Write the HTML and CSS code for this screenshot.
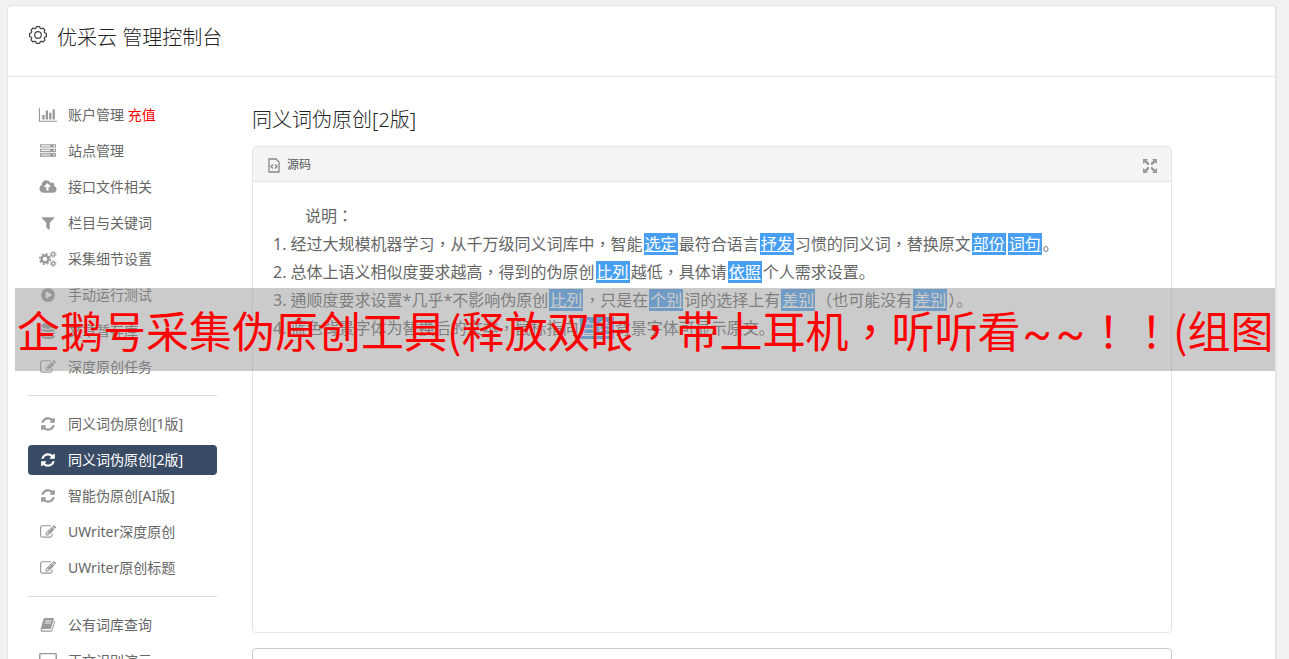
FILE: index.html
```html
<!DOCTYPE html>
<html lang="zh-CN">

<head>
    <meta charset="UTF-8">
    <meta name="viewport" content="width=device-width, initial-scale=1.0">
    <title>优采云 管理控制台</title>
    <link rel="stylesheet" href="styles.css">
</head>

<body>
    <svg class="sprite" aria-hidden="true">
        <symbol id="refresh" viewBox="0 0 1792 1792"><path d="M1639 1056q0 5-1 7-64 268-268 434.5t-478 166.5q-146 0-282.5-55t-243.5-157l-129 129q-19 19-45 19t-45-19-19-45v-448q0-26 19-45t45-19h448q26 0 45 19t19 45-19 45l-137 137q71 66 161 102t187 36q134 0 250-65t186-179q11-17 53-117 8-23 30-23h192q13 0 22.5 9.5t9.5 22.5zm25-800v448q0 26-19 45t-45 19h-448q-26 0-45-19t-19-45 19-45l138-138q-148-137-349-137-134 0-250 65t-186 179q-11 17-53 117-8 23-30 23h-199q-13 0-22.5-9.5t-9.5-22.5v-7q65-268 270-434.5t480-166.5q146 0 284 55.5t245 156.5l130-129q19-19 45-19t45 19 19 45z"/></symbol>
        <symbol id="edit" viewBox="0 0 1792 1792"><path d="M888 1184l116-116-152-152-116 116v56h96v96h56zm440-720q-16-16-33 1l-350 350q-17 17-1 33t33-1l350-350q17-17 1-33zm80 594v190q0 119-84.5 203.5t-203.5 84.5h-832q-119 0-203.5-84.5t-84.5-203.5v-832q0-119 84.5-203.5t203.5-84.5h832q63 0 117 25 15 7 18 23 3 17-9 29l-49 49q-14 14-32 8-23-6-45-6h-832q-66 0-113 47t-47 113v832q0 66 47 113t113 47h832q66 0 113-47t47-113v-126q0-13 9-22l64-64q15-15 35-7t20 29zm-96-738l288 288-672 672h-288v-288zm444 132l-92 92-288-288 92-92q28-28 68-28t68 28l152 152q28 28 28 68t-28 68z"/></symbol>
    </svg>

    <div class="container">
        <header class="header">
            <svg class="gear" viewBox="0 0 20 20" aria-hidden="true">
                <path d="M8.4 1.6h3.2l.6 1.7 1.2.5 1.6-.8 2 2-.8 1.6.5 1.2 1.7.6v3.2l-1.7.6-.5 1.2.8 1.6-2 2-1.6-.8-1.2.5-.6 1.7H8.4l-.6-1.7-1.2-.5-1.6.8-2-2 .8-1.6-.5-1.2-1.7-.6V8.4l1.7-.6.5-1.2L3 5l2-2 1.600.8 1.200-.5z"/>
                <circle cx="10" cy="10" r="3.3"/>
            </svg>
            <h1>优采云 管理控制台</h1>
        </header>

        <div class="main">
            <nav class="sidebar">
                <a href="#"><svg viewBox="0 0 2048 1792"><path d="M640 896v512h-256v-512h256zm384-512v1024h-256v-1024h256zm1024 1152v128h-2048v-1536h128v1408h1920zm-640-896v768h-256v-768h256zm384-384v1152h-256v-1152h256z"/></svg><span>账户管理 <b>充值</b></span></a>
                <a href="#"><svg viewBox="0 0 1792 1792"><path d="M128 1408h1024v-128h-1024v128zm0-512h1024v-128h-1024v128zm1568 448q0-40-28-68t-68-28-68 28-28 68 28 68 68 28 68-28 28-68zm-1568-960h1024v-128h-1024v128zm1568 448q0-40-28-68t-68-28-68 28-28 68 28 68 68 28 68-28 28-68zm0-512q0-40-28-68t-68-28-68 28-28 68 28 68 68 28 68-28 28-68zm96 832v384h-1792v-384h1792zm0-512v384h-1792v-384h1792zm0-512v384h-1792v-384h1792z"/></svg><span>站点管理</span></a>
                <a href="#"><svg viewBox="0 0 1920 1792"><path d="M1280 864q0-14-9-23l-352-352q-9-9-23-9t-23 9l-351 351q-10 12-10 24 0 14 9 23t23 9h224v352q0 13 9.500 22.500t22.500 9.500h192q13 0 22.500-9.500t9.500-22.500v-352h224q13 0 22.500-9.500t9.500-22.500zm640 288q0 159-112.500 271.500t-271.500 112.500h-1088q-185 0-316.500-131.500t-131.500-316.500q0-130 70-240t188-165q-2-30-2-43 0-212 150-362t362-150q156 0 285.500 87t188.500 231q71-62 166-62 106 0 181 75t75 181q0 76-41 138 130 31 213.500 135.500t83.500 238.500z"/></svg><span>接口文件相关</span></a>
                <a href="#"><svg viewBox="0 0 1792 1792"><path d="M1595 295q17 41-14 70l-493 493v742q0 42-39 59-13 5-25 5-27 0-45-19l-256-256q-19-19-19-45v-486l-493-493q-31-29-14-70 17-39 59-39h1280q42 0 59 39z"/></svg><span>栏目与关键词</span></a>
                <a href="#"><svg class="cogs" viewBox="0 0 18 16">
                    <circle cx="6" cy="8" r="3.4" stroke-width="2.4"/><circle cx="6" cy="8" r="5.2" stroke-width="1.6" stroke-dasharray="2.04 2.04"/>
                    <circle cx="14.2" cy="3.4" r="1.8" stroke-width="1.3"/><circle cx="14.2" cy="3.4" r="2.8" stroke-width="1" stroke-dasharray="1.1 1.1"/>
                    <circle cx="14.2" cy="12.6" r="1.8" stroke-width="1.3"/><circle cx="14.2" cy="12.6" r="2.8" stroke-width="1" stroke-dasharray="1.1 1.1"/>
                </svg><span>采集细节设置</span></a>
                <a href="#"><svg viewBox="0 0 1792 1792"><path d="M896 128q209 0 385.500 103t279.500 279.500 103 385.500-103 385.500-279.500 279.500-385.500 103-385.500-103-279.500-279.500-103-385.500 103-385.500 279.500-279.500 385.500-103zm384 823q32-18 32-55t-32-55l-544-320q-31-19-64-1-32 19-32 56v640q0 37 32 56 16 8 32 8 17 0 32-9z"/></svg><span>手动运行测试</span></a>
                <a href="#"><svg viewBox="0 0 1792 1792"><path d="M896 768q237 0 443-43t325-127v170q0 69-103 128t-280 93.500-385 34.500-385-34.500-280-93.500-103-128v-170q119 84 325 127t443 43zm0 768q237 0 443-43t325-127v170q0 69-103 128t-280 93.500-385 34.500-385-34.500-280-93.500-103-128v-170q119 84 325 127t443 43zm0-384q237 0 443-43t325-127v170q0 69-103 128t-280 93.500-385 34.500-385-34.500-280-93.500-103-128v-170q119 84 325 127t443 43zm0-1152q208 0 385 34.500t280 93.500 103 128v128q0 69-103 128t-280 93.500-385 34.500-385-34.500-280-93.500-103-128v-128q0-69 103-128t280-93.500 385-34.500z"/></svg><span>文章暂存库</span></a>
                <a href="#"><svg><use href="#edit"/></svg><span>深度原创任务</span></a>
                <hr>
                <a href="#"><svg><use href="#refresh"/></svg><span>同义词伪原创[1版]</span></a>
                <a href="#" class="active"><svg><use href="#refresh"/></svg><span>同义词伪原创[2版]</span></a>
                <a href="#"><svg><use href="#refresh"/></svg><span>智能伪原创[AI版]</span></a>
                <a href="#"><svg><use href="#edit"/></svg><span>UWriter深度原创</span></a>
                <a href="#"><svg><use href="#edit"/></svg><span>UWriter原创标题</span></a>
                <hr>
                <a href="#"><svg viewBox="0 0 16 16"><path fill-rule="evenodd" d="M5 1h8.200q1 0 .7 1l-2.700 9q-.3 1-1.300 1H2.500q-.8 0-.8.700 0 .8 1 .8h8q.8 0 1.100-.9L14.500 3.500q.9.500.6 1.400l-2.700 8.600q-.4 1.300-1.800 1.300H2.500Q1 14.800.7 13.300q-.2-.8.2-2L3.300 2.500Q3.700 1 5 1zm.6 2.500-.3.900h6l.3-.9zm-.7 2.200-.3.900h6l.3-.9z"/></svg><span>公有词库查询</span></a>
                <a href="#"><svg viewBox="0 0 18 16"><path fill-rule="evenodd" d="M1.500 0h15Q18 0 18 1.500v10q0 1.500-1.500 1.500H11l1 3H6l1-3H1.500Q0 13 0 11.500v-10Q0 0 1.500 0zm0 1.300v8.700h15V1.300z"/></svg><span>正文识别演示</span></a>
            </nav>

            <main class="content">
                <h2>同义词伪原创[2版]</h2>
                <section class="editor">
                    <div class="toolbar">
                        <button class="source">
                            <svg viewBox="0 0 12 15" aria-hidden="true"><path d="M1 1h7l3 3v10H1z"/><path d="M5 6.500 3 8.500l2 2M7 6.500l2 2-2 2"/></svg>源码
                        </button>
                        <button class="full" aria-label="全屏">
                            <svg viewBox="0 0 14 14" aria-hidden="true"><path d="M0 0h5L3.600 1.400 6 3.800v2.200H4.600L1.800 3.200 0 5zM14 0v5l-1.800-1.800L9.400 6H8V3.800l2.400-2.400L9 0zM0 14V9l1.800 1.800L4.600 8H6v2.200l-2.400 2.400L5 14zM14 14H9l1.400-1.400L8 10.200V8h1.400l2.800 2.800L14 9z"/></svg>
                        </button>
                    </div>
                    <div class="text" lang="zh-TW">
                        <p class="indent">说明：</p>
                        <p>1. 经过大规模机器学习，从千万级同义词库中，智能<u>选定</u>最符合语言<u>抒发</u>习惯的同义词，替换原文<u>部份</u><u>词句</u><span lang="zh-CN">。</span></p>
                        <p>2. 总体上语义相似度要求越高，得到的伪原创<u>比列</u>越低，具体请<u>依照</u>个人需求设置<span lang="zh-CN">。</span></p>
                        <p>3. 通顺度要求设置*几乎*不影响伪原创<u>比列</u>，只是在<u>个别</u>词的选择上有<u>差别</u>（也可能没有<u>差别</u>）<span lang="zh-CN">。</span></p>
                        <p>4. 蓝色背景字体为替换后的文本，鼠标指向<u>白色</u>背景字体可显示原文<span lang="zh-CN">。</span></p>
                    </div>
                </section>
                <section class="output"></section>
            </main>
        </div>
    </div>

    <div class="banner" lang="zh-TW">企鹅号采集伪原创工具(释放双眼，带上耳机，听听看<span class="wave">~</span><span class="wave">~</span>！！(组图</div>
</body>

</html>
```
FILE: styles.css
```css
* { box-sizing: border-box; }
body {
    margin: 0;
    height: 100vh;
    overflow: hidden;
    padding: 5px 12px 0 7px;
    background: #f1f1f1;
    color: #666;
    font-family: "Noto Sans", "Noto Sans CJK SC", sans-serif;
    font-size: 14px;
}
.sprite { display: none; }
h1, h2 {
    margin: 0;
    font-size: 20px;
    line-height: 28px;
    font-weight: 300;
    color: #222;
}
.container {
    background: white;
    border: 1px solid #e5e5e5;
    border-right-width: 2px;
    border-radius: 5px;
}
.header {
    display: flex;
    gap: 9px;
    padding: 18px 20px 24px;
    border-bottom: 1px solid #e5e5e5;
}
.gear {
    width: 20px;
    height: 20px;
    margin-top: 1px;
    fill: none;
    stroke: #444;
    stroke-width: 1.2;
}
.main {
    display: flex;
    gap: 35px;
    padding: 23px 103px 20px 20px;
}
.sidebar {
    display: flex;
    flex-direction: column;
    flex: none;
    gap: 6px;
    width: 189px;
}
.sidebar a {
    display: flex;
    align-items: center;
    gap: 10px;
    height: 30px;
    padding-left: 10px;
    border-radius: 4px;
    color: #666;
    text-decoration: none;
}
.sidebar span { padding-bottom: 2px; }
.sidebar svg {
    width: 20px;
    height: 16px;
    fill: #999;
}
.sidebar .cogs { fill: none; stroke: #999; }
.sidebar b { font-weight: 400; color: red; }
.sidebar .active { background: #3a4b66; color: white; }
.sidebar .active svg { fill: white; }
.sidebar hr {
    width: 100%;
    height: 1px;
    margin: 7px 0;
    border: none;
    background: #ddd;
}
.content { flex: 1; padding-top: 6px; }
.editor {
    margin-top: 12px;
    min-height: 487px;
    border: 1px solid #e5e5e5;
    border-radius: 4px;
}
.toolbar {
    display: flex;
    justify-content: space-between;
    align-items: center;
    height: 35px;
    padding: 0 14px 0 15px;
    background: #f4f4f4;
    border-bottom: 1px solid #e5e5e5;
}
.toolbar button {
    display: flex;
    align-items: center;
    gap: 7px;
    padding: 0;
    border: none;
    background: none;
    color: #555;
    font: inherit;
    font-size: 12px;
}
.toolbar svg { margin-top: 3px; }
.source svg { width: 12px; height: 15px; fill: none; stroke: #888; stroke-width: 1.3; }
.full svg { width: 14px; height: 14px; fill: #999; }
.text {
    padding: 20px;
    font-size: 16px;
    line-height: 28px;
}
.text p { margin: 0; }
.text .indent { text-indent: 2em; }
.text u {
    margin: 0 1px;
    padding: 0 1px;
    background: #489ff2;
    color: white;
}
.output {
    margin-top: 15px;
    min-height: 60px;
    border: 1px solid #ccc;
    border-radius: 4px;
}
.banner {
    position: absolute;
    top: 288px;
    left: 15px;
    right: 14px;
    height: 83px;
    padding-left: 2px;
    overflow: hidden;
    white-space: nowrap;
    background: rgba(151, 151, 151, 0.5);
    color: red;
    font-family: "Noto Sans CJK TC", sans-serif;
    font-size: 43px;
    line-height: 83px;
}
.wave { padding: 0 2px; font-family: Roboto, sans-serif; }
```
